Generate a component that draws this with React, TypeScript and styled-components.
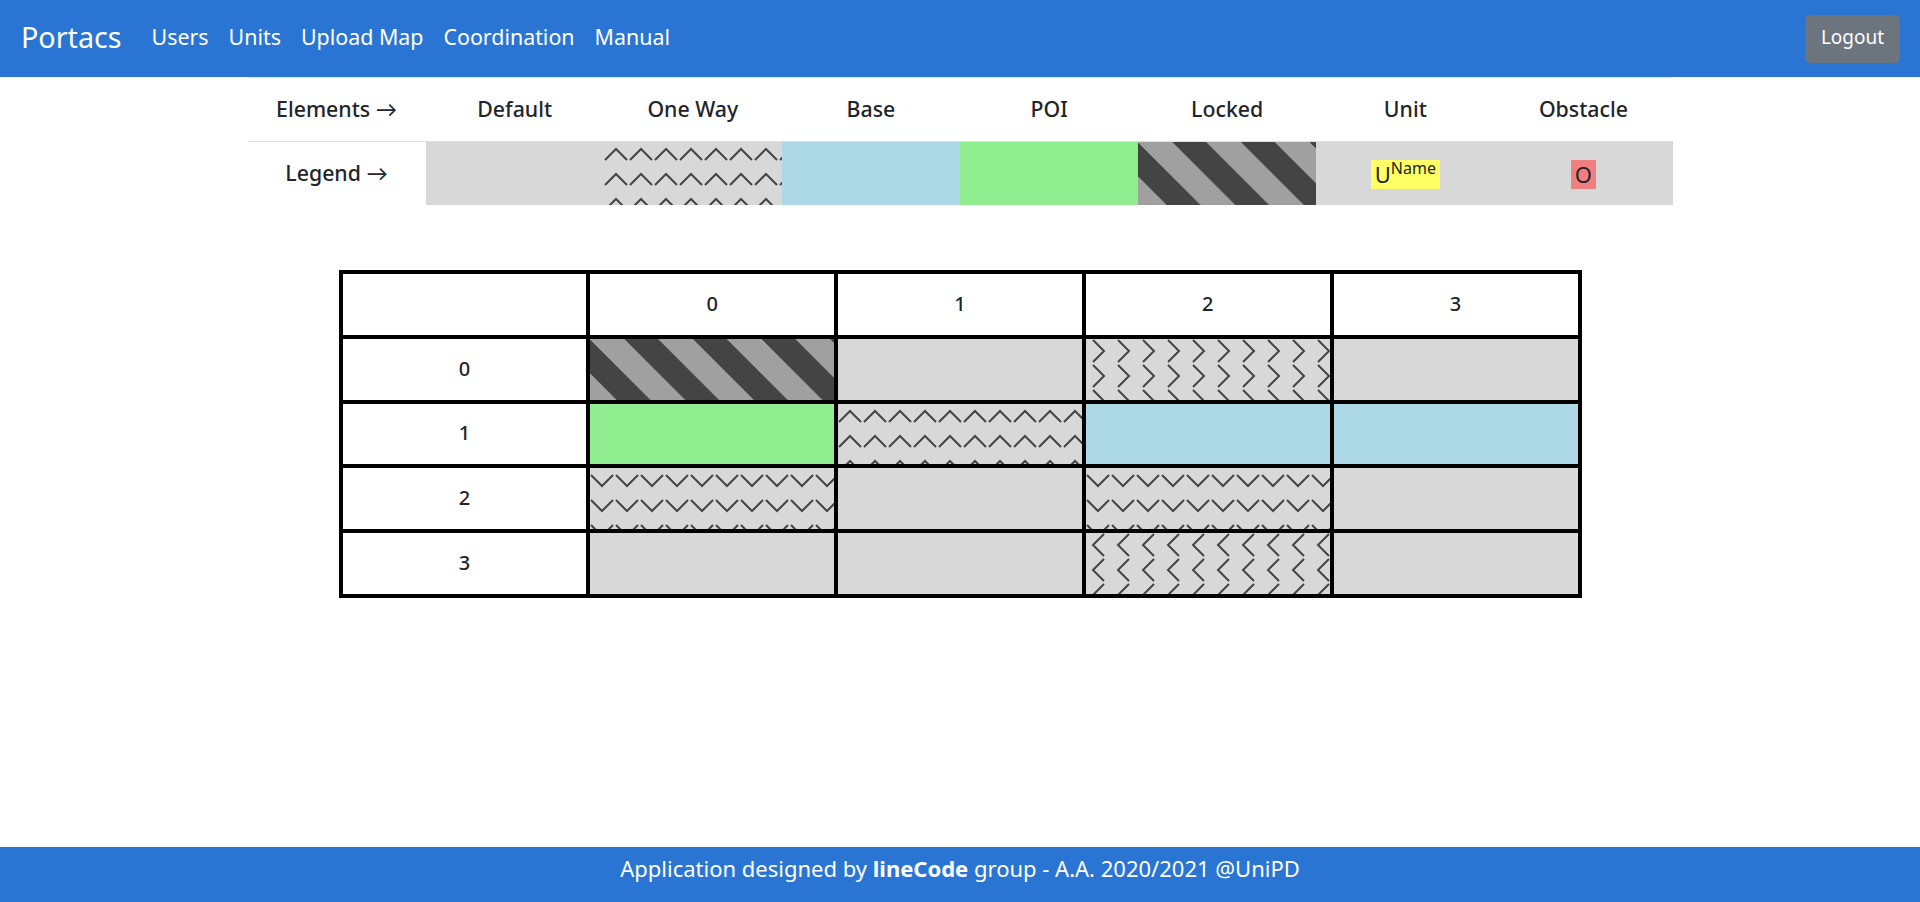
import React from "react";
import styled, { createGlobalStyle, css } from "styled-components";

const Global = createGlobalStyle`
  html, body { margin: 0; padding: 0; background: #fff; }
  body { font-family: "Noto Sans", "Lato", sans-serif; color: #212529; }
`;

type Kind = "default" | "up" | "down" | "right" | "left" | "base" | "poi" | "locked";

const tile = (d: string) =>
  `url("data:image/svg+xml,${encodeURIComponent(
    `<svg xmlns='http://www.w3.org/2000/svg' width='25' height='25'><path d='${d}' fill='none' stroke='#444' stroke-width='2'/></svg>`
  )}")`;

const patterns: Record<Kind, ReturnType<typeof css>> = {
  default: css`background: #d8d8d8;`,
  up: css`background: #d8d8d8 ${tile("M1 18 L12 7 L23 18")};`,
  down: css`background: #d8d8d8 ${tile("M1 7 L12 18 L23 7")};`,
  right: css`background: #d8d8d8 ${tile("M7 1 L18 12 L7 23")};`,
  left: css`background: #d8d8d8 ${tile("M18 1 L7 12 L18 23")};`,
  base: css`background: #add8e6;`,
  poi: css`background: #90ee90;`,
  locked: css`
    background-image: linear-gradient(45deg, #a0a0a0 25%, #444 25%, #444 50%, #a0a0a0 50%, #a0a0a0 75%, #444 75%);
    background-size: 68.6px 68.6px;
  `,
};

const Page = styled.div`
  min-height: 902px;
  display: flex;
  flex-direction: column;
`;

const NavBar = styled.nav`
  height: 77px;
  box-sizing: border-box;
  background: #2a75d4;
  display: flex;
  align-items: center;
  padding: 0 20px 4px 21px;
  color: #fff;
`;

const Brand = styled.a`
  font-size: 28.7px;
  margin-right: 20px;
`;

const NavLink = styled.a`
  font-size: 21.4px;
  padding: 0 10px;
`;

const LogoutButton = styled.button`
  margin-left: auto;
  width: 95px;
  height: 48px;
  margin-top: 4px;
  padding: 0 0 4px;
  border: none;
  border-radius: 5px;
  background: #6c757d;
  color: #fff;
  font: inherit;
  font-size: 19px;
`;

const Main = styled.main`
  flex: 1;
  display: flex;
  flex-direction: column;
  align-items: center;
`;

const LegendTable = styled.table`
  width: 1425px;
  table-layout: fixed;
  border-collapse: separate;
  border-spacing: 0;
  margin: 0 0 65px 0;
`;

const LegendCell = styled.td`
  height: 64px;
  padding: 0 0 2px;
  box-sizing: border-box;
  border-top: 1px solid #dee2e6;
  text-align: center;
  font-size: 21.3px;
  font-weight: 500;
`;

const Swatch = styled(LegendCell)<{ $kind: Kind }>`
  padding: 0;
  ${(p) => patterns[p.$kind]}
`;

const Marker = styled.span<{ $color: string }>`
  display: inline-block;
  height: 29px;
  line-height: 29px;
  padding: 0 4px;
  background: ${(p) => p.$color};
  font-weight: 400;
  font-size: 22px;
  vertical-align: middle;
`;

const Sup = styled.sup`
  font-size: 16px;
  line-height: 0;
  vertical-align: 9px;
`;

const MapTable = styled.table`
  width: 1243px;
  table-layout: fixed;
  border-collapse: collapse;
`;

const MapHead = styled.th`
  height: 64.8px;
  padding: 0 0 2px;
  box-sizing: border-box;
  border: 4px solid #000;
  font-size: 20px;
  font-weight: 500;
  text-align: center;
`;

const MapCell = styled.td<{ $kind: Kind }>`
  height: 64.8px;
  padding: 0;
  box-sizing: border-box;
  border: 4px solid #000;
  ${(p) => patterns[p.$kind]}
`;

const Footer = styled.footer`
  height: 55px;
  box-sizing: border-box;
  background: #2a75d4;
  color: #fff;
  font-size: 22px;
  text-align: center;
  line-height: 42px;
`;

const legendHeads = ["Elements →", "Default", "One Way", "Base", "POI", "Locked", "Unit", "Obstacle"];
const grid: Kind[][] = [
  ["locked", "default", "right", "default"],
  ["poi", "up", "base", "base"],
  ["down", "default", "down", "default"],
  ["default", "default", "left", "default"],
];

export default function App() {
  return (
    <Page>
      <Global />
      <NavBar>
        <Brand>Portacs</Brand>
        {["Users", "Units", "Upload Map", "Coordination", "Manual"].map((l) => (
          <NavLink key={l}>{l}</NavLink>
        ))}
        <LogoutButton>Logout</LogoutButton>
      </NavBar>
      <Main>
        <LegendTable>
          <tbody>
            <tr>
              {legendHeads.map((h) => (
                <LegendCell key={h}>{h}</LegendCell>
              ))}
            </tr>
            <tr>
              <LegendCell>Legend →</LegendCell>
              <Swatch $kind="default" />
              <Swatch $kind="up" />
              <Swatch $kind="base" />
              <Swatch $kind="poi" />
              <Swatch $kind="locked" />
              <Swatch $kind="default">
                <Marker $color="#ffff66">
                  U<Sup>Name</Sup>
                </Marker>
              </Swatch>
              <Swatch $kind="default">
                <Marker $color="#f08080">O</Marker>
              </Swatch>
            </tr>
          </tbody>
        </LegendTable>
        <MapTable>
          <thead>
            <tr>
              <MapHead />
              {[0, 1, 2, 3].map((n) => (
                <MapHead key={n}>{n}</MapHead>
              ))}
            </tr>
          </thead>
          <tbody>
            {grid.map((row, i) => (
              <tr key={i}>
                <MapHead>{i}</MapHead>
                {row.map((k, j) => (
                  <MapCell key={j} $kind={k} />
                ))}
              </tr>
            ))}
          </tbody>
        </MapTable>
      </Main>
      <Footer>
        Application designed by <b>lineCode</b> group - A.A. 2020/2021 @UniPD
      </Footer>
    </Page>
  );
}
